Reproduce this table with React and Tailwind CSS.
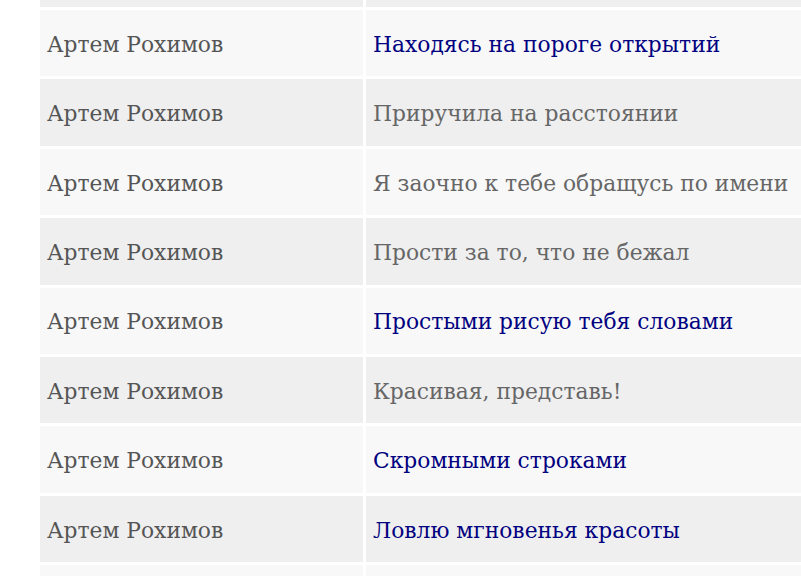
const rows = [
  { author: '', title: '', link: false },
  { author: 'Артем Рохимов', title: 'Находясь на пороге открытий', link: true },
  { author: 'Артем Рохимов', title: 'Приручила на расстоянии', link: false },
  { author: 'Артем Рохимов', title: 'Я заочно к тебе обращусь по имени', link: false },
  { author: 'Артем Рохимов', title: 'Прости за то, что не бежал', link: false },
  { author: 'Артем Рохимов', title: 'Простыми рисую тебя словами', link: true },
  { author: 'Артем Рохимов', title: 'Красивая, представь!', link: false },
  { author: 'Артем Рохимов', title: 'Скромными строками', link: true },
  { author: 'Артем Рохимов', title: 'Ловлю мгновенья красоты', link: true },
  { author: '', title: '', link: false },
];

export default function App() {
  return (
    <div className="w-[801px] h-[576px] overflow-hidden bg-white font-['DejaVu_Serif',serif]">
      <table className="-mt-[62.4px] ml-[37px] w-[800px] border-separate border-spacing-[3px] text-[21.8px] leading-none">
        <tbody>
          {rows.map((r, i) => (
            <tr key={i} className={i % 2 === 0 ? 'bg-[#efefef]' : 'bg-[#f8f8f8]'}>
              <td className="h-[66.4px] w-[323px] px-[7px] pt-[3px] text-[#555555] align-middle whitespace-nowrap">{r.author}</td>
              <td className={`h-[66.4px] px-[7px] pt-[3px] align-middle whitespace-nowrap ${r.link ? 'text-[#000080]' : 'text-[#666666]'}`}>
                {r.title}
              </td>
            </tr>
          ))}
        </tbody>
      </table>
    </div>
  );
}
